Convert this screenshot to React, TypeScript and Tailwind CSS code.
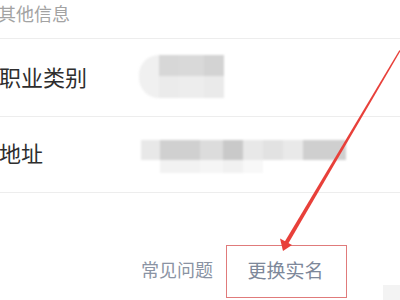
import React from "react"

const cjk = { fontFamily: '"Noto Sans CJK SC", "Noto Sans", sans-serif' }

// pixelated placeholder (blurred value) cells
function Cells({ cells, h }: { cells: [number, string][]; h: number }) {
  return (
    <div className="flex" style={{ height: h }}>
      {cells.map(([w, c], i) => (
        <div key={i} style={{ width: w, background: c }} />
      ))}
    </div>
  )
}

export default function App() {
  return (
    <div className="relative w-[400px] h-[300px] overflow-hidden bg-white" style={cjk}>
      {/* header */}
      <div className="h-[39px] border-b border-[#ededed] flex items-start">
        <span className="-ml-[2px] mt-[2px] text-[18px] leading-[22px] text-[#a3a3a3]">其他信息</span>
      </div>

      {/* 职业类别 */}
      <div className="h-[78px] border-b border-[#ededed] flex items-center">
        <span className="w-[140px] text-[22px] text-[#2e2e2e] -ml-[1px] -mt-[3px]">职业类别</span>
        <div className="flex blur-[1px] -mt-[2px]">
          <div className="w-[20px] h-[43px] rounded-l-full bg-[#f0f0f0]" />
          <div>
            <Cells h={21} cells={[[20, "#d7d7d7"], [25, "#d9d9d9"], [20, "#d3d3d3"]]} />
            <Cells h={22} cells={[[20, "#ebebeb"], [25, "#ededed"], [20, "#eaeaea"]]} />
          </div>
        </div>
      </div>

      {/* 地址 */}
      <div className="h-[76px] border-b border-[#ededed] flex items-center">
        <span className="w-[142px] text-[22px] text-[#2e2e2e] -ml-[1px] -mt-[4px]">地址</span>
        <div className="blur-[1px] mt-[4px]">
          <Cells
            h={20}
            cells={[
              [19, "#e8e8e8"],
              [40, "#d0d0d0"],
              [23, "#dcdcdc"],
              [20, "#c9c9c9"],
              [20, "#e8e8e8"],
              [20, "#e2e2e2"],
              [20, "#e9e9e9"],
              [43, "#cfcfcf"],
            ]}
          />
          <Cells h={13} cells={[[19, "#ffffff"], [40, "#f2f2f2"], [23, "#f5f5f5"], [20, "#f1f1f1"], [20, "#f8f8f8"]]} />
        </div>
      </div>

      {/* footer links */}
      <div className="flex items-end pl-[141px] pt-[52px]">
        <span className="text-[18px] text-[#8a93a3] pb-[15px]">常见问题</span>
        <div className="ml-[13px] w-[121px] h-[53px] border-[1.5px] border-[#e07b7b] flex items-center justify-center">
          <span className="text-[19px] text-[#7d889a] -mt-[2px] -ml-[2px]">更换实名</span>
        </div>
      </div>

      <div className="absolute right-0 bottom-0 w-[17px] h-[15px] bg-[#f3f3f3]" />

      {/* red annotation arrow */}
      <svg className="absolute inset-0 pointer-events-none" width="400" height="300" viewBox="0 0 400 300">
        <polygon points="399.5,50 400.5,51 288,244 284.5,242" fill="#e8403a" />
        <polygon points="283,251 280,238.5 292,245" fill="#e8403a" />
      </svg>
    </div>
  )
}
